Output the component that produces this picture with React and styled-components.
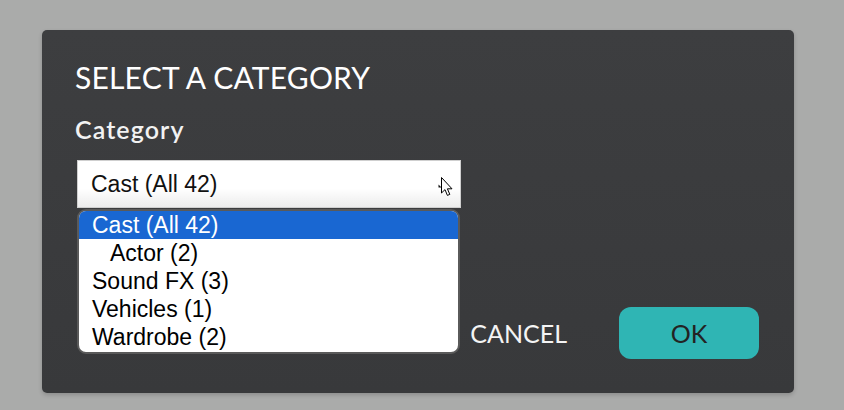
import React from 'react'
import styled, { createGlobalStyle } from 'styled-components'

const GlobalStyle = createGlobalStyle`
  html, body {
    margin: 0;
    padding: 0;
    background: #aaabaa;
    width: 844px;
    height: 410px;
    overflow: hidden;
  }
`

const categories = [
  { label: 'Cast (All 42)', selected: true },
  { label: 'Actor (2)', child: true },
  { label: 'Sound FX (3)' },
  { label: 'Vehicles (1)' },
  { label: 'Wardrobe (2)' },
]

const App = () => {
  return (
    <>
      <GlobalStyle />
      <Page>
        <Dialog>
          <Title>SELECT A CATEGORY</Title>
          <Label>Category</Label>
          <SelectWrap>
            <SelectBox>
              <span>Cast (All 42)</span>
              <Pointer width="16" height="22" viewBox="0 0 16 22">
                <path d="M0.5 8.5 L3.5 11.5 L0.5 11.5 Z" fill="#111" />
                <path
                  d="M3.5 1.5 L3.5 17 L7 13.6 L9.4 19.4 L11.8 18.4 L9.4 12.8 L14 12.8 Z"
                  fill="#fff"
                  stroke="#000"
                  strokeWidth="1"
                  strokeLinejoin="miter"
                />
              </Pointer>
            </SelectBox>
            <ListBox>
              {categories.map((c) => (
                <Option key={c.label} selected={c.selected} child={c.child}>
                  {c.label}
                </Option>
              ))}
            </ListBox>
          </SelectWrap>
          <Footer>
            <TextButton>CANCEL</TextButton>
            <OkButton>OK</OkButton>
          </Footer>
        </Dialog>
      </Page>
    </>
  )
}

const Page = styled.div`
  padding: 30px 0 0 42px;
`

const Dialog = styled.div`
  width: 752px;
  height: 363px;
  box-sizing: border-box;
  padding: 29px 35px 34px 33px;
  background: linear-gradient(180deg, #3d3e40 0%, #38393b 100%);
  border-radius: 5px;
  box-shadow: 0 2px 4px rgba(0, 0, 0, 0.18);
  display: flex;
  flex-direction: column;
  font-family: Lato, 'Open Sans', sans-serif;
`

const Title = styled.h2`
  margin: 0;
  font-size: 30px;
  font-weight: 400;
  line-height: 36px;
  color: #ffffff;
  letter-spacing: 0.2px;
`

const Label = styled.div`
  margin-top: 20px;
  font-size: 25px;
  font-weight: 600;
  line-height: 28px;
  color: #f2f2f2;
  letter-spacing: 1.1px;
`

const SelectWrap = styled.div`
  position: relative;
  margin-top: 17px;
  margin-left: 2px;
  width: 384px;
`

const SelectBox = styled.div`
  height: 48px;
  box-sizing: border-box;
  display: flex;
  align-items: center;
  justify-content: space-between;
  padding: 0 6px 0 13px;
  background: linear-gradient(180deg, #ffffff 0%, #ffffff 60%, #ececec 100%);
  border: 1px solid #cfcfcf;
  font-family: 'Liberation Sans', Arial, sans-serif;
  font-size: 23px;
  color: #111;
`

const Pointer = styled.svg`
  margin-top: 6px;
`

const ListBox = styled.div`
  position: absolute;
  top: 49px;
  left: 0;
  width: 383px;
  box-sizing: border-box;
  background: #fff;
  border: 2px solid #5a5a5a;
  border-radius: 9px;
  overflow: hidden;
  padding-bottom: 1px;
  font-family: 'Liberation Sans', Arial, sans-serif;
  font-size: 23px;
  z-index: 2;
`

const Option = styled.div`
  height: 28px;
  line-height: 28px;
  padding-left: ${(p) => (p.child ? '31px' : '13px')};
  background: ${(p) => (p.selected ? '#1967d2' : 'transparent')};
  color: ${(p) => (p.selected ? '#ffffff' : '#000000')};
`

const Footer = styled.div`
  margin-top: auto;
  display: flex;
  justify-content: flex-end;
  align-items: center;
  gap: 52px;
`

const TextButton = styled.button`
  background: none;
  border: none;
  padding: 0;
  font-family: Lato, sans-serif;
  font-size: 25px;
  color: #f4f4f4;
`

const OkButton = styled.button`
  width: 140px;
  height: 52px;
  border: none;
  border-radius: 12px;
  background: #2fb5b4;
  font-family: Lato, sans-serif;
  font-size: 25px;
  color: #232323;
`

export default App
